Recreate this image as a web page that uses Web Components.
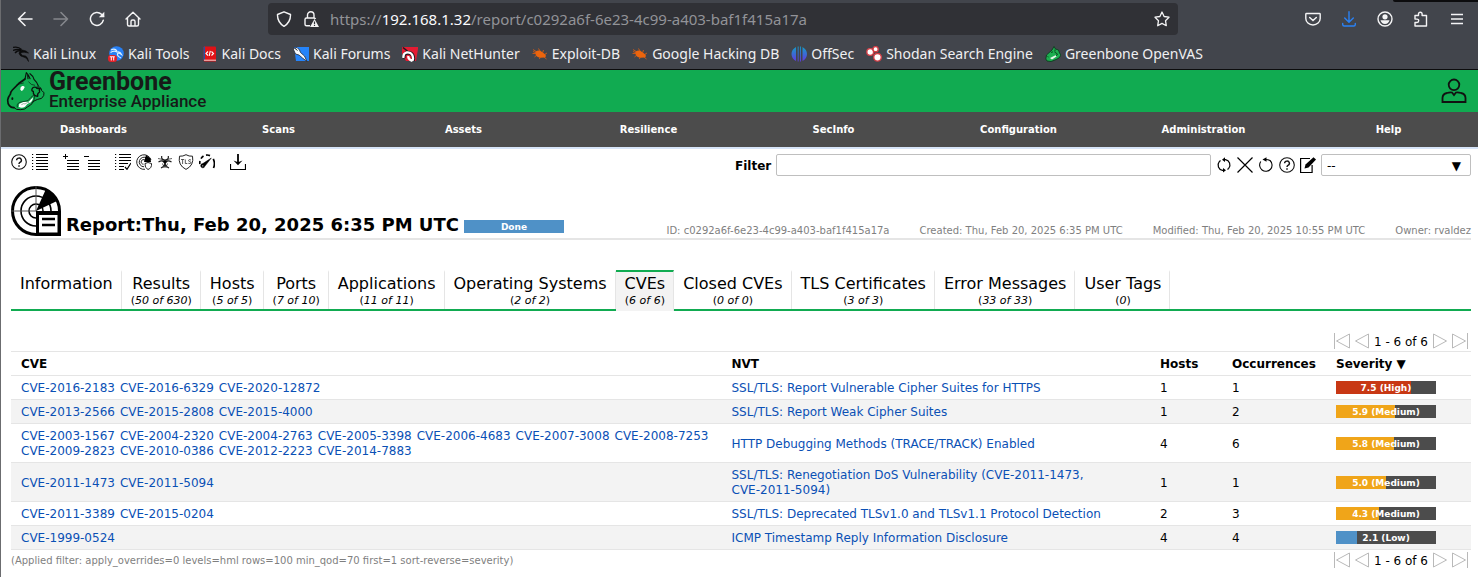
<!DOCTYPE html>
<html lang="en">
<head>
<meta charset="utf-8">
<meta name="viewport" content="width=device-width, initial-scale=1">
<title>Greenbone Enterprise Appliance</title>
<style>
  body { margin: 0; background: #fff; color: #000; font: 12px/15px "DejaVu Sans", Verdana, sans-serif; }
</style>
</head>
<body>
<openvas-window></openvas-window>
<script>
const ICONS = {
  back: ['0 0 16 16', '<path d="M15 8H1.5M8 1.5 1.5 8 8 14.5" stroke-width="1.6" fill="none" stroke="currentColor" stroke-linecap="round" stroke-linejoin="round"/>'],
  forward: ['0 0 16 16', '<path d="M1 8h13.5M8 1.5 14.5 8 8 14.5" stroke-width="1.6" fill="none" stroke="currentColor" stroke-linecap="round" stroke-linejoin="round"/>'],
  reload: ['0 0 16 16', '<path d="M14.3 9.2A6.5 6.5 0 1 1 12.5 3.3L14.5 5.3" stroke-width="1.5" fill="none" stroke="currentColor" stroke-linecap="round"/><path d="M15.3.8v5.5H9.8z" fill="currentColor"/>'],
  home: ['0 0 16 16', '<path d="M1 8 8 1.3 15 8M2.5 7v6.5q0 1.5 1.5 1.5h8q1.5 0 1.5-1.5V7M6 15v-4.500q0-1.500 1.500-1.500h1q1.500 0 1.500 1.500V15" stroke-width="1.4" fill="none" stroke="currentColor" stroke-linecap="round" stroke-linejoin="round"/>'],
  shield: ['0 0 16 16', '<path d="M8 .8 14.5 3.5Q14.8 11 8 15.4 1.2 11 1.5 3.5z" stroke-width="1.4" fill="none" stroke="currentColor" stroke-linejoin="round"/>'],
  lock: ['0 0 16 16', '<path d="M4.5 7V4a3 3 0 0 1 6.5 0v3M7 14.8H3.5q-1.500 0-1.500-1.500V8.500Q2 7 3.500 7h7.500q1.300 0 1.500 1" stroke-width="1.4" fill="none" stroke="currentColor"/><path d="M11.5 8 16 16H7z" fill="currentColor"/><path d="M11.5 10.5v2.500m0 .8v1.200" stroke="#303136" stroke-width="1.2"/>'],
  star: ['0 0 16 16', '<path d="m8 1 2.100 4.500 4.900.7-3.500 3.500.8 5L8 12.400 3.700 14.700l.8-5L1 6.200l4.900-.7z" stroke-width="1.3" fill="none" stroke="currentColor" stroke-linejoin="round"/>'],
  pocket: ['0 0 16 16', '<path d="M1.500 2.500h13q.7 0 .7.700V7.500a7.200 6.500 0 0 1-14.400 0V3.200q0-.7.7-.7z" stroke-width="1.4" fill="none" stroke="currentColor"/><path d="m4.700 6.500 3.300 3 3.300-3" stroke-width="1.5" fill="none" stroke="currentColor" stroke-linecap="round"/>'],
  dl: ['0 0 16 16', '<path d="M8 .8v10M3.700 7 8 11.200 12.300 7M1.700 12.500v1q0 1.500 1.500 1.500h9.600q1.500 0 1.500-1.500v-1" stroke-width="1.4" fill="none" stroke="currentColor" stroke-linecap="round" stroke-linejoin="round"/>'],
  account: ['0 0 16 16', '<circle cx="8" cy="8" r="7" stroke-width="1.4" fill="none" stroke="currentColor"/><circle cx="8" cy="5.8" r="2.6" fill="currentColor"/><path d="M3.500 9.300h9Q11.500 13 8 13T3.500 9.300z" fill="currentColor"/>'],
  ext: ['0 0 16 16', '<path d="M2 4.500h3.500V3a1.800 1.800 0 0 1 3.600 0v1.500h4.400V15H2v-3.500h2a1.700 1.700 0 0 0 0-3.400H2z" stroke-width="1.4" fill="none" stroke="currentColor" stroke-linejoin="round"/>'],
  menu: ['0 0 16 16', '<path d="M2 3.500h12M2 8h12M2 12.500h12" stroke-width="1.4" stroke="currentColor"/>'],

  kali: ['0 0 16 16', '<path d="M0 1.500Q5 0 8.500 3.500M0 4.500Q4.500 2.500 8.500 4.500M2 7q2-2.500 6-2.500" stroke="#0b0b0c" stroke-width="1.3" fill="none"/><path d="M7.500 3.500 13 5l2.500 2-4-.7Q7 6 8 8t4.500 2Q15 11 15.500 15.500 14 11.500 10.500 11T6 7.500Q6 5 9 4.500" fill="#0b0b0c" stroke="#0b0b0c" stroke-width=".6"/>'],
  tools: ['0 0 16 16', '<circle cx="8.5" cy="7.5" r="7.3" fill="#2780f5"/><path d="M3 4q4-2 6 1M2.500 6.500Q6 4 9 6q3-1 4.500 2.500Q10 6 9.500 8t3.500 4" stroke="#dcefff" stroke-width="1.2" fill="none"/><rect y="9" width="9" height="7" rx="3" fill="#e32028"/><path d="M1.800 10.800h5M3.300 11v3.500M5.700 11v3.500" stroke="#fff" stroke-width="1"/>'],
  docs: ['0 0 16 16', '<path d="M2 .5h11q1 0 1 1V15.500H3.500Q1.500 15.500 1.500 14V1z" fill="#e01217"/><path d="M1.500 1v13l1.500-.5V.5z" fill="#2355a0"/><path d="M2 14.200h12" stroke="#f3d8d5" stroke-width="1"/><path d="M6 5.500 4 7.500 6 9.500M9.500 5.500l2 2-2 2M8.300 4.800 7.200 10" stroke="#fff" stroke-width="1.1" fill="none"/>'],
  forums: ['0 0 16 16', '<path d="M1 1h15v14H3z" fill="#2584fa"/><path d="m0 2.500 4-1 2.500 2.500 1 2.500 4 3.500 2.500 5.500-4.500-3.500-3.500-3L2.500 8z" fill="#f8fbff" stroke="#222733" stroke-width=".8"/><path d="m1.500 2 3 2.500" stroke="#222" stroke-width="1"/>'],
  nethunter: ['0 0 16 16', '<path d="M0 1h16v2l-2 12H4L0 8z" fill="#e31b32"/><path d="M1 1.500 9 8" stroke="#191a1e" stroke-width="1.5"/><path d="M2 12.500Q.8 8 5 7q4-.6 5.500 2 1.500 3 .5 5.500" stroke="#191a1e" stroke-width="3.6" fill="none"/><path d="M1.500 12Q.8 7.500 4.500 6.500q4-.6 5.500 2 1.800 3.500.5 6M6.500 10q-1 3 4 5" stroke="#fff" stroke-width="2.3" fill="none"/>'],
  exploit: ['0 0 16 16', '<path d="M3.500 5.500Q7 3.500 10 6l3.500 2.500q1 2.500-1 3l-4 .2Q4 11 3.500 8z" fill="#ed650d"/><path d="M1 3.500 5 6M.5 7.500h4M2.500 11l3-2.500M6.500 2.500 8 5M11.500 4l-1 3M15 7l-2.500 1.500M8 11l-.5 2M12 11l2.500 2M1 5.500l3.500 1.500" stroke="#e45e0e" stroke-width=".8"/>'],
  offsec: ['0 0 16 16', '<defs><linearGradient id="os" x2="0" y2="1"><stop stop-color="#159cc9"/><stop offset="1" stop-color="#603be0"/></linearGradient></defs><path d="M5 1Q.5 3.500.5 8T5 15zM11.500 1Q16 3.500 16 8t-4.500 7z" fill="url(#os)"/><path d="M6.700.5h.9v15h-.9zM9 .5h.9v15H9z" fill="url(#os)"/>'],
  shodan: ['0 0 16 16', '<g fill="#fff" stroke="#d23e46" stroke-width="1.4"><circle cx="4.2" cy="6" r="3.4"/><circle cx="9.600" cy="3.2" r="2.6"/><circle cx="11.5" cy="11.3" r="3.8"/></g>'],
  dragon: ['0 0 16 16', '<path d="m7 4 2-3.500 1.500 2.500 3 1 1 3 1.500 2-2 3-4 2-4 1.500-4-.5L.8 13l.7-4z" fill="#1caf50" stroke="#0d3c1e" stroke-width=".9"/><path d="m5 12 6-3 .5 1.500L7 13.500z" fill="#e7f5eb"/><path d="m6 6.500 2-.7M9.500 6l3 2-1.500 2M2.500 10.500l1 .5M10 3.500v2" stroke="#073d18" stroke-width=".9" fill="none"/>'],
  horse: ['6 6 120 120', '<g fill="none" stroke="#0a130d" stroke-linecap="round" stroke-linejoin="round"><path d="M63 30Q56 36 47 41L25 63Q20 68 19 76 12 85 11 93q0 12 5 17 6 7 14 6" stroke-width="5"/><path d="m63 30 4-19q8 8 11 18M78 14q9 6 12 17 9 8 13 20M71 17l1 12" stroke-width="3.5"/><path d="M30 116q6 8 20 6 14 0 20-8l10-6 10-12 11-5q14 0 18-11 4-10-4-14-4 0-3-7-4-7-13-5" stroke-width="3"/><path d="M40 114q-3-10 8-14l24-5 9-10q8-8 11-6 2 12-8 22" stroke-width="2"/><path d="M84 60q3-7 12-5 3 6 13 3-5 5-2 11-8 4-6 13-14-1-13-15-6-1-4-7z" stroke-width="4"/><path d="M38 48q8-4 20-6M74 39q7 10 18 10" stroke-width="2"/></g><path d="M49 62q-1-8 5-11 7-1 8 4-3 8-9 11z" fill="#fff"/><path d="m44 113 2-9 12-5 16-1 8-8 5-5q0 10-6 15l-11 5-7 8q-10 6-19 0z" fill="#fff"/><path d="m52 107 7-3 4 1 8-5 5 1" fill="none" stroke="#2d6b43" stroke-width="1.5"/><ellipse cx="25" cy="89" rx="3" ry="4" fill="#0a130d"/>'],
  user: ['0 0 26 26', '<g fill="none" stroke="#111" stroke-width="1.8"><circle cx="13" cy="6.8" r="5.3"/><path d="M1.500 24V20q0-4 4.500-5 3-1 5-.5l2 2.500 2-2.500q2-.5 5 .5 4.500 1 4.500 5v4z"/></g>'],

  help: ['0 0 16 16', '<circle cx="8" cy="8" r="7.3" fill="none" stroke="#111" stroke-width="1.1"/><path d="M5.600 6.300a2.400 2.200 0 1 1 3.300 2Q8 8.800 8 10" fill="none" stroke="#111" stroke-width="1.4"/><path d="M8 11.200v1.500" stroke="#111" stroke-width="1.5"/>'],
  list: ['0 0 16 16', '<path d="M4 .5h12M4 3.500h12M4 6.500h12M4 9.500h12M4 12.500h12M4 15.500h12M0 .5h1.200M0 3.500h1.200M0 6.500h1.200M0 9.500h1.200M0 12.500h1.200M0 15.500h1.200" stroke="#000"/>'],
  plus: ['0 0 16 16', '<path d="M4 6.500h12M4 9.500h12M4 12.500h12M4 15.500h12M0 2.500h5M2.500 0v5" stroke="#000"/>'],
  minus: ['0 0 16 16', '<path d="M4 6.500h12M4 9.500h12M4 12.500h12M4 15.500h12M0 2.500h5" stroke="#000"/>'],
  check: ['0 0 16 16', '<path d="M4 .5h12M4 3.500h12M4 6.500h12M4 9.500h9M4 12.500h5M4 15.500h5M0 .5h1.200M0 3.500h1.200M0 6.500h1.200M0 9.500h1.200M0 12.500h1.200M0 15.500h1.200" stroke="#000"/><path d="m10 13 2 2.300L16 9" fill="none" stroke="#000" stroke-width="1.2"/>'],
  vuln: ['0 0 16 16', '<g fill="none" stroke="#222" stroke-width="1"><path d="M9 15.300A7.300 7.300 0 1 1 15 6"/><path d="M8 12.800A4.800 4.800 0 1 1 11 4.200M7.500 10.200A2.300 2.300 0 1 1 9 6.200"/><path d="m12 8.500 3.500 1Q16 14 12 15.500 8.500 14 9 9.500z"/></g><path d="M8 8 10 1l4.500 3.500L15 8z" fill="#000"/>'],
  bio: ['0 0 16 16', '<g fill="none" stroke="#1c1c1c"><path d="M4.700 2Q4 6 8 6t3.300-4M1.500 8Q5.500 5.500 7.300 8.500T4 14M14.500 8q-4-2.500-5.800.5T12 14" stroke-width="1.2"/><path d="M5.500 9.500q0 2.500 2.500 2.500t2.500-2.500M1 4.500l4 .8M15 4.500l-4 .8" stroke-width=".7"/></g><circle cx="8" cy="7.5" r="1.6"/><path d="M6.500 12h3l.7 1.500H5.800z" fill="#444"/>'],
  tls: ['0 0 16 16', '<path d="M8 .7q3 1.800 6.500 1.500 1.800 9-6.500 13.200Q-.3 11.200 1.500 2.200 5 2.500 8 .7z" fill="none" stroke="#222" stroke-width="1"/><path d="M3 5.500h3.200M4.600 5.500V10M7.300 5.500v4h2M13 6q-2.500-1-2.500.5 0 .8 1.300 1.100t1.200 1.200q-.5 1.200-2.700.5" fill="none" stroke="#333" stroke-width=".8"/>'],
  gauge: ['0 0 16 16', '<path d="M.9 10Q.6 8.500 1 7M2 4.600Q3 3 4.500 2M7 1.100q2-.3 4 .5M14.300 4.800q2.200 5 .2 9.200" fill="none" stroke="#000" stroke-width="1.7"/><path d="M12.300 4 5.800 12.300a2.100 2.100 0 1 1-2-2.700z" stroke="#000" stroke-width=".5"/><circle cx="3.800" cy="11.800" r=".6" fill="#fff"/>'],
  download: ['0 0 16 16', '<path d="M.5 10v5.500h15V10" fill="none" stroke="#000" stroke-width="1.2"/><path d="M8 0v9" stroke="#000" stroke-width="1.8"/><path d="m3.500 6.500 4.500 4.800 4.500-4.800L8 8.300z"/>'],
  refresh: ['0 0 16 16', '<path d="M7.500 13.300H6.500A5.300 5.300 0 0 1 3.300 4.700L4.500 3.500M8.500 2.700h1a5.300 5.300 0 0 1 3.200 8.600L11.500 12.500" fill="none" stroke="#000" stroke-width="1.2"/><path d="M9 .3 6 2.700l3 2.200zM7 11l3 2.300-3 2.200z"/>'],
  cross: ['0 0 16 16', '<path d="m.5.500 15 15M15.500.5.500 15.500" stroke="#000" stroke-width="1.2"/>'],
  reset: ['0 0 16 16', '<path d="M2.800 4.500A6.200 6.200 0 1 0 12 3.500Q10.500 2.500 7 2.500" fill="none" stroke="#000" stroke-width="1.1"/><path d="m4.500 2.500 4-2.300v4.600z"/>'],
  edit: ['0 0 16 16', '<path d="M10 1.500H.6V15.500h11.500V8" fill="none" stroke="#000" stroke-width="1.2"/><path d="m4.500 11.500 1-4L13.500.3 16 2.500 8.500 10.500z"/>'],
  first: ['0 0 16 16', '<path d="M.5 0v16M15.500 1v14L2.500 8z" fill="none" stroke="#b9b9b9"/>'],
  prev: ['0 0 16 16', '<path d="M14.500 1v14L1.500 8z" fill="none" stroke="#b9b9b9"/>'],
  next: ['0 0 16 16', '<path d="M1.500 1v14l13-7z" fill="none" stroke="#b9b9b9"/>'],
  last: ['0 0 16 16', '<path d="M15.500 0v16M.5 1v14l13-7z" fill="none" stroke="#b9b9b9"/>'],
  report: ['0 0 50 50', '<g fill="none" stroke="#000"><circle cx="25" cy="25" r="23.5" stroke-width="3"/><circle cx="25" cy="25" r="15" stroke-width="1.6"/><circle cx="25" cy="25" r="7" stroke-width="1.6"/><path d="M0 25h25V0" stroke="#555" stroke-width="1"/></g><path d="M25 25 35 3q6 3 11 12z"/><path d="M25 25h25v25H25z"/><path d="M28 29h18.500v17.500H28z" fill="#fff"/><path d="M31 33h13M31 39h13" stroke="#000" stroke-width="2.6"/>']
};

/* Defines an element whose shadow root is cloned from a template. */
function define(name, css, html) {
  const template = document.createElement('template');
  customElements.define(name, class extends HTMLElement {
    constructor() { super(); this.attachShadow({ mode: 'open' }); }
    connectedCallback() {
      if (this.shadowRoot.childNodes.length) return;
      template.innerHTML = `<style>*{box-sizing:border-box}${css}</style>${typeof html === 'function' ? html(this) : html}`;
      this.shadowRoot.append(template.content.cloneNode(true));
    }
  });
}
const icon = (name) => `<ui-icon name="${name}"></ui-icon>`;
const iconButton = (name, label) => `<button type="button" aria-label="${label}" title="${label}">${icon(name)}</button>`;
const plainButton = 'button{appearance:none;border:0;background:none;padding:0;margin:0;color:inherit;font:inherit;display:flex;cursor:pointer}';

define('ui-icon', ':host{display:inline-block;flex:none;width:var(--icon,16px);height:var(--icon,16px)}svg{display:block;width:100%;height:100%}',
  el => { const [box, art] = ICONS[el.getAttribute('name')]; return `<svg viewBox="${box}" aria-hidden="true">${art}</svg>`; });

define('browser-toolbar', `
  :host{display:flex;align-items:center;height:37px;padding:0 13px 0 16px;box-sizing:border-box;color:#f4f4f5;position:relative}
  ${plainButton}
  .group{display:flex;gap:20px}.group button:disabled{color:#85878c}
  .gap{flex:127 1 0}
  .url{flex:894 1 0;display:flex;align-items:center;gap:11px;height:32px;padding:0 8px;background:#303136;border-radius:4px}
  .address{flex:1;min-width:0;overflow:hidden}
  .blue{color:#2a82f5}
  .edge{position:absolute;top:0;right:0;width:85px;height:2px;background:#0c0c0e;border-bottom-left-radius:2px}`,
  `<div class="group">${iconButton('back', 'Back')}<button type="button" aria-label="Forward" disabled>${icon('forward')}</button>${iconButton('reload', 'Reload')}${iconButton('home', 'Home')}</div>
  <span class="gap"></span>
  <div class="url">${icon('shield')}${icon('lock')}
    <div class="address"><slot></slot></div>
    ${iconButton('star', 'Bookmark this page')}</div>
  <span class="gap"></span>
  <div class="group">${iconButton('pocket', 'Save to Pocket')}<span class="blue">${iconButton('dl', 'Downloads')}</span>${iconButton('account', 'Account')}${iconButton('ext', 'Extensions')}${iconButton('menu', 'Menu')}</div>
  <span class="edge"></span>`);

define('address-text', ':host{display:block;font:15px/20px "Noto Sans",sans-serif;color:#929398;white-space:nowrap}::slotted(b){font-weight:400;color:#fbfbfe}', '<slot></slot>');

define('bookmark-link', ':host{display:block}a{display:flex;align-items:center;gap:4px;color:#f0f0f2;text-decoration:none;white-space:nowrap}',
  el => `<a href="#">${icon(el.getAttribute('icon'))}<slot></slot></a>`);

define('bookmark-bar', ':host{display:flex;align-items:center;gap:12px;height:32px;padding:2px 12px 0;box-sizing:border-box;font:14px/20px "Noto Sans",sans-serif}', '<slot></slot>');

define('browser-chrome', ':host{display:block;background:#42454c;border-bottom:1px solid #0c0c0d}', `
  <browser-toolbar><address-text>https://<b>192.168.1.32</b>/report/c0292a6f-6e23-4c99-a403-baf1f415a17a</address-text></browser-toolbar>
  <bookmark-bar>
    <bookmark-link icon="kali">Kali Linux</bookmark-link>
    <bookmark-link icon="tools">Kali Tools</bookmark-link>
    <bookmark-link icon="docs">Kali Docs</bookmark-link>
    <bookmark-link icon="forums">Kali Forums</bookmark-link>
    <bookmark-link icon="nethunter">Kali NetHunter</bookmark-link>
    <bookmark-link icon="exploit">Exploit-DB</bookmark-link>
    <bookmark-link icon="exploit">Google Hacking DB</bookmark-link>
    <bookmark-link icon="offsec">OffSec</bookmark-link>
    <bookmark-link icon="shodan">Shodan Search Engine</bookmark-link>
    <bookmark-link icon="dragon">Greenbone OpenVAS</bookmark-link>
  </bookmark-bar>`);

define('app-header', `
  :host{display:flex;align-items:center;justify-content:space-between;height:42px;padding:0 11px 0 5px;box-sizing:border-box;background:#11ab51;color:#161a18}
  ${plainButton}
  a{display:flex;align-items:center;gap:3px;color:inherit;text-decoration:none}
  a ui-icon{--icon:40px} button ui-icon{--icon:26px}
  .name{display:flex;flex-direction:column;font-family:Roboto,sans-serif}
  strong{font-size:25px;line-height:21px;font-weight:700}
  span span{font-size:17px;line-height:19px;font-weight:500}`,
  `<a href="#">${icon('horse')}<span class="name"><strong>Greenbone</strong><span>Enterprise Appliance</span></span></a>${iconButton('user', 'User')}`);

define('main-menu', `
  :host{display:block;background:#4c4c4c;border-bottom:2px solid #d6e4f8;overflow:hidden}
  nav{display:flex;margin-right:-3px}
  a{flex:1 1 0;text-align:center;color:#fff;text-decoration:none;font-size:10px;font-weight:700;line-height:35px}`,
  `<nav>${['Dashboards', 'Scans', 'Assets', 'Resilience', 'SecInfo', 'Configuration', 'Administration', 'Help'].map(t => `<a href="#">${t}</a>`).join('')}</nav>`);

define('page-tools', `
  :host{display:flex;justify-content:space-between;align-items:flex-start;gap:20px;padding-top:5px}
  ${plainButton}
  .actions,.set,.filter,.buttons{display:flex;gap:5px}.actions{gap:15px}
  .filter{flex:0 1 736px;align-items:center}
  label{font-weight:700;line-height:16px;padding-top:2px}
  input{flex:1;min-width:60px;height:22px;border:1px solid #bfbfbf;border-radius:2px;padding:0 5px;font:inherit}
  .select{position:relative;flex:none;width:150px;display:flex}
  select{appearance:none;width:100%;height:22px;border:1px solid #bfbfbf;border-radius:2px;background:#fff;padding:2px 5px 0;font:inherit;color:#000}
  .select span{position:absolute;right:10px;top:5px;pointer-events:none}`,
  `<div class="actions">
    <div class="set">${iconButton('help', 'Help: Reading Reports')}${iconButton('list', 'Reports List')}</div>
    <div class="set">${iconButton('plus', 'Add to Assets')}${iconButton('minus', 'Remove from Assets')}</div>
    <div class="set">${iconButton('check', 'Task')}${iconButton('vuln', 'Results')}${iconButton('bio', 'Vulnerabilities')}${iconButton('tls', 'TLS Certificates')}${iconButton('gauge', 'Performance')}</div>
    <div class="set">${iconButton('download', 'Download')}</div>
  </div>
  <form class="filter"><label for="filter">Filter</label><input id="filter" type="text">
    <div class="buttons">${iconButton('refresh', 'Update Filter')}${iconButton('cross', 'Remove Filter')}${iconButton('reset', 'Reset Filter')}${iconButton('help', 'Help: Powerfilter')}${iconButton('edit', 'Edit Filter')}</div>
    <div class="select"><select aria-label="Saved filter"><option>--</option></select><span aria-hidden="true">▼</span></div>
  </form>`);

define('progress-meter', `
  :host{display:block;flex:none;width:100px;height:13px;color:#fff;font-size:9px;font-weight:700;line-height:14px;text-align:center}
  div{height:100%}`,
  el => `<div style="background:linear-gradient(90deg,${el.getAttribute('color')} ${el.getAttribute('value')}%,#4c4c4c ${el.getAttribute('value')}%)"><slot></slot></div>`);

define('report-heading', `
  :host{display:flex;justify-content:space-between;align-items:flex-end;margin-top:10px;padding-bottom:2px;border-bottom:2px solid #e5e5e5}
  .title{display:flex;align-items:flex-end;gap:5px}
  ui-icon{--icon:50px}
  h1{margin:0;font-size:18px;line-height:22px;white-space:nowrap}
  progress-meter{margin-bottom:3px}
  .meta{display:flex;gap:30px;color:#7f7f7f;font-size:10px;line-height:10px;white-space:nowrap}`,
  `<div class="title">${icon('report')}<h1>Report:Thu, Feb 20, 2025 6:35 PM UTC</h1><progress-meter value="100" color="#4f91c7">Done</progress-meter></div>
  <div class="meta"><span>ID: c0292a6f-6e23-4c99-a403-baf1f415a17a</span><span>Created: Thu, Feb 20, 2025 6:35 PM UTC</span><span>Modified: Thu, Feb 20, 2025 10:55 PM UTC</span><span>Owner: rvaldez</span></div>`);

define('report-tab', `
  :host{display:flex}
  button{appearance:none;margin:0;border:0;border-top:2px solid transparent;border-right:1px solid #e5e5e5;background:none;background-clip:padding-box;padding:2px 8px 0 9px;height:39px;display:flex;flex-direction:column;align-items:center;font:16px/20px "DejaVu Sans",Verdana,sans-serif;color:#000;white-space:nowrap}
  small{font-size:11px;line-height:13px;font-style:normal}
  :host([selected]) button{border-top-color:#11ab51;background:#f3f3f3;height:41px}`,
  el => `<button type="button" role="tab" aria-selected="${el.hasAttribute('selected')}"><slot></slot>${el.hasAttribute('count') ? `<small>(<i>${el.getAttribute('count')}</i>)</small>` : ''}</button>`);

define('report-tabs', ':host{display:block;margin-top:30px;border-bottom:2px solid #11ab51}div{display:flex;height:39px}', '<div role="tablist"><slot></slot></div>');

define('table-pager', `:host{display:flex;justify-content:flex-end;align-items:center;gap:4px;height:18px;padding-right:3px}${plainButton}span{line-height:16px;padding-top:1px}`,
  `${iconButton('first', 'First')}${iconButton('prev', 'Previous')}<span>1 - 6 of 6</span>${iconButton('next', 'Next')}${iconButton('last', 'Last')}`);

const CVES = [
  ['CVE-2016-2183 CVE-2016-6329 CVE-2020-12872', 'SSL/TLS: Report Vulnerable Cipher Suites for HTTPS', 1, 1, 7.5, 'High'],
  ['CVE-2013-2566 CVE-2015-2808 CVE-2015-4000', 'SSL/TLS: Report Weak Cipher Suites', 1, 2, 5.9, 'Medium'],
  ['CVE-2003-1567 CVE-2004-2320 CVE-2004-2763 CVE-2005-3398 CVE-2006-4683 CVE-2007-3008 CVE-2008-7253 CVE-2009-2823 CVE-2010-0386 CVE-2012-2223 CVE-2014-7883', 'HTTP Debugging Methods (TRACE/TRACK) Enabled', 4, 6, 5.8, 'Medium'],
  ['CVE-2011-1473 CVE-2011-5094', 'SSL/TLS: Renegotiation DoS Vulnerability (CVE-2011-1473, <span>CVE-2011-5094)</span>', 1, 1, 5.0, 'Medium'],
  ['CVE-2011-3389 CVE-2015-0204', 'SSL/TLS: Deprecated TLSv1.0 and TLSv1.1 Protocol Detection', 2, 3, 4.3, 'Medium'],
  ['CVE-1999-0524', 'ICMP Timestamp Reply Information Disclosure', 4, 4, 2.1, 'Low']
];
const LEVEL = { High: '#c83814', Medium: '#f0a519', Low: '#4f91c7' };

define('cve-table', `
  :host{display:block}
  table{width:100%;border-collapse:collapse;table-layout:fixed}
  .nvt{width:29.35%}.hosts{width:72px}.occurrences{width:104px}.severity{width:145px}
  th,td{padding:5px 10px 3px;text-align:left;font-size:12px;line-height:15px;border:solid #e5e5e5;border-width:1px 0}
  td:last-child{padding:4px 10px}
  tbody tr:nth-child(even){background:#f3f3f3}
  a{color:#0a50b5;text-decoration:none}
  td span{white-space:nowrap}
  .links{display:flex;flex-wrap:wrap;gap:0 5px}
  th a{color:#000}`,
  `<table><colgroup><col><col class="nvt"><col class="hosts"><col class="occurrences"><col class="severity"></colgroup>
  <thead><tr><th><a href="#">CVE</a></th><th><a href="#">NVT</a></th><th><a href="#">Hosts</a></th><th><a href="#">Occurrences</a></th><th><a href="#">Severity ▼</a></th></tr></thead>
  <tbody>${CVES.map(([ids, nvt, hosts, occ, score, level]) => `<tr>
    <td><div class="links">${ids.split(' ').map(id => `<a href="#">${id}</a>`).join('')}</div></td>
    <td><a href="#">${nvt}</a></td><td>${hosts}</td><td>${occ}</td>
    <td><progress-meter value="${score * 10}" color="${LEVEL[level]}">${score.toFixed(1)} (${level})</progress-meter></td></tr>`).join('')}</tbody></table>`);

define('table-footer', ':host{display:flex;justify-content:space-between;align-items:flex-start;padding-top:1px}span{color:#7f7f7f;font-size:10px;line-height:20px}',
  '<span>(Applied filter: apply_overrides=0 levels=hml rows=100 min_qod=70 first=1 sort-reverse=severity)</span><table-pager></table-pager>');

define('openvas-window', `
  :host{display:block;min-height:100vh;border-left:1px solid #6b6c6f;box-sizing:border-box}
  main{padding:0 7px 0 10px}
  table-pager{margin:21px 0 1px}`,
  `<browser-chrome></browser-chrome><app-header></app-header><main-menu></main-menu>
  <main>
    <page-tools></page-tools><report-heading></report-heading>
    <report-tabs>
      <report-tab>Information</report-tab><report-tab count="50 of 630">Results</report-tab><report-tab count="5 of 5">Hosts</report-tab><report-tab count="7 of 10">Ports</report-tab><report-tab count="11 of 11">Applications</report-tab><report-tab count="2 of 2">Operating Systems</report-tab><report-tab count="6 of 6" selected>CVEs</report-tab><report-tab count="0 of 0">Closed CVEs</report-tab><report-tab count="3 of 3">TLS Certificates</report-tab><report-tab count="33 of 33">Error Messages</report-tab><report-tab count="0">User Tags</report-tab>
    </report-tabs>
    <table-pager></table-pager><cve-table></cve-table><table-footer></table-footer>
  </main>`);
</script>
</body>
</html>
